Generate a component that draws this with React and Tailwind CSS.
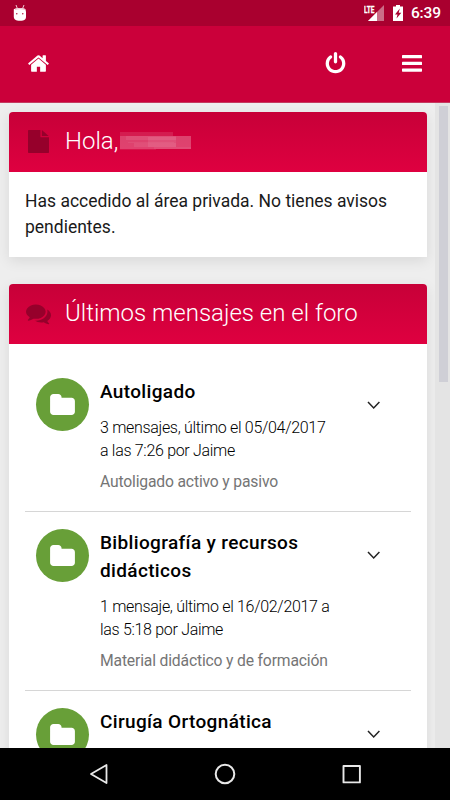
const threads = [
  {
    title: ["Autoligado"],
    info: ["3 mensajes, último el 05/04/2017", "a las 7:26 por Jaime"],
    description: "Autoligado activo y pasivo",
  },
  {
    title: ["Bibliografía y recursos", "didácticos"],
    info: ["1 mensaje, último el 16/02/2017 a", "las 5:18 por Jaime"],
    description: "Material didáctico y de formación",
  },
  {
    title: ["Cirugía Ortognática"],
  },
];

export default function App() {
  return (
    <div className="flex h-[800px] w-[450px] flex-col overflow-hidden bg-[#eeeeee] font-['Roboto',sans-serif]">
      <StatusBar />
      <Header />

      <div className="flex min-h-0 flex-1">
        <main className="flex w-[435px] shrink-0 flex-col gap-[26.5px] overflow-hidden pl-[9px] pt-[8.5px]">
          <Card title="Hola," icon={<FileIcon />} masked>
            <p className="h-[85.5px] whitespace-nowrap px-4 pt-4 text-[17.5px] leading-[26px] text-[#1a1a1a]">
              Has accedido al área privada. No tienes avisos
              <br />
              pendientes.
            </p>
          </Card>

          <Card title="Últimos mensajes en el foro" icon={<CommentsIcon />}>
            <div className="px-4 pt-[17.5px]">
              {threads.map((thread) => (
                <Thread key={thread.title[0]} thread={thread} />
              ))}
            </div>
          </Card>
        </main>

        {/* Scrollbar */}
        <div className="flex-1 bg-[#e4e4e4] pl-1 pt-[3px]">
          <div className="h-[276px] w-[9px] bg-[#cfcfd6]"></div>
        </div>
      </div>

      <NavigationBar />
    </div>
  );
}

function StatusBar() {
  return (
    <div className="flex h-[26px] shrink-0 items-center bg-[#a9002f] pl-[13px] pr-[9px] text-white">
      <DebugIcon />
      <div className="ml-auto flex items-center">
        <SignalIcon />
        <BatteryIcon />
        <span className="ml-2 pt-[2px] text-[15.5px] font-medium leading-none tracking-[-0.1px]">6:39</span>
      </div>
    </div>
  );
}

function Header() {
  return (
    <header className="flex h-[77px] shrink-0 items-center border-b border-[#c43a60] bg-[#cb003a] pb-[2px] pl-[27px] pr-[28px] text-white">
      <button>
        <HomeIcon />
      </button>
      <button className="ml-auto">
        <PowerIcon />
      </button>
      <button className="ml-[55.5px]">
        <MenuIcon />
      </button>
    </header>
  );
}

function Card({ title, icon, masked, children }) {
  return (
    <section className="w-[417.5px] shrink-0 rounded-t bg-white shadow-[0_4px_14px_rgba(0,0,0,0.09)]">
      <div className="flex h-[60px] items-center rounded-t bg-linear-to-b from-[#c70038] to-[#df0040] pb-px pl-[17px] text-white">
        <div className="flex w-[39px] shrink-0 text-[#96002b]">{icon}</div>
        <h2 className="whitespace-nowrap text-[24px] font-light leading-none">{title}</h2>
        {masked && <MaskedName />}
      </div>
      {children}
    </section>
  );
}

// Pixelated strip that hides the user's name
function MaskedName() {
  return (
    <svg className="ml-[2px] h-[19px] w-[71px]" viewBox="0 0 71 19" shapeRendering="crispEdges" fill="#fff">
      <path fillOpacity=".11" d="M0 0h53v4H0z" />
      <path fillOpacity=".26" d="M0 4h71v13H0z" />
      <path fillOpacity=".08" d="M0 17h36v1H0z" />
      <path fillOpacity=".07" d="M6 4h50v4H6zM14 11h42v4H14z" />
      <path fillOpacity=".08" d="M28 5h28v10H28z" />
      <path fillOpacity=".06" d="M8 10h46v1H8zM34 15h37v2H34z" />
    </svg>
  );
}

function Thread({ thread }) {
  return (
    <article className="flex border-b border-[#d6d6d6] pb-[17px] pl-[11px] pt-[17px]">
      <div className="flex h-[53px] w-[53px] shrink-0 items-center justify-center rounded-full bg-[#689f38] text-white">
        <FolderIcon />
      </div>
      <div className="ml-[11px] w-[266px] whitespace-nowrap">
        <h3 className="text-[19px] font-medium leading-[28.5px] tracking-[0.35px] text-black">
          {thread.title.map((line) => (
            <span key={line} className="block">{line}</span>
          ))}
        </h3>
        {thread.info && (
          <p className="mt-[9px] text-[16px] font-light leading-[23px] tracking-[-0.31px] text-black">
            {thread.info.map((line) => (
              <span key={line} className="block">{line}</span>
            ))}
          </p>
        )}
        {thread.description && (
          <p className="mt-2 text-[15.7px] leading-[24px] tracking-[-0.17px] text-[#757575]">{thread.description}</p>
        )}
      </div>
      <button className="mt-[18.5px] h-4 w-4 text-[#222]">
        <ChevronIcon />
      </button>
    </article>
  );
}

function NavigationBar() {
  return (
    <nav className="flex h-[52px] shrink-0 items-center justify-between bg-black px-[88px] text-[#e8e8e8]">
      <svg className="h-[22px] w-[22px]" viewBox="0 0 22 22" fill="none" stroke="currentColor" strokeWidth="1.8" strokeLinejoin="round">
        <path d="M3 11 18.500 2v18z" />
      </svg>
      <svg className="h-[22px] w-[22px]" viewBox="0 0 22 22" fill="none" stroke="currentColor" strokeWidth="2">
        <circle cx="11" cy="11" r="9.300" />
      </svg>
      <svg className="h-[22px] w-[22px]" viewBox="0 0 22 22" fill="none" stroke="currentColor" strokeWidth="1.9" strokeLinejoin="round">
        <path d="M3.500 3h16.400v16.400H3.500z" />
      </svg>
    </nav>
  );
}

function DebugIcon() {
  return (
    <svg className="h-4 w-[14px]" viewBox="0 0 14 16" fill="currentColor">
      <path d="M3 0l1.200 3M11 0 9.800 3" stroke="currentColor" strokeWidth=".8" />
      <path d="M.8 4.200C3 2.600 11 2.600 12.500 4.200L13 7v5q0 3-3 3.400-3 .5-6 0-3-.4-3.200-3.400V7z" />
      <path d="M2 4.300q5-1.300 10 0" stroke="#e3a5b6" strokeWidth=".8" fill="none" />
      <circle cx="3.800" cy="8.800" r=".7" fill="#a9002f" />
      <circle cx="9.800" cy="8.800" r=".7" fill="#a9002f" />
    </svg>
  );
}

function SignalIcon() {
  return (
    <svg className="h-[17px] w-5" viewBox="0 0 20 17">
      <path fill="#cb6d87" d="M20 0v16H4z" />
      <path fill="#a9002f" d="M0 0h11v9H0z" />
      <path fill="#fff" d="M13 7v9H4z" />
      <text x="0" y="7.500" fill="#fff" stroke="#fff" strokeWidth=".3" fontSize="9" fontWeight="700" textLength="10.500" lengthAdjust="spacingAndGlyphs">LTE</text>
    </svg>
  );
}

function BatteryIcon() {
  return (
    <svg className="ml-[9px] h-4 w-[10px]" viewBox="0 0 10 16">
      <path fill="#fff" d="M3 0h4v1.500h3V16H0V1.500h3z" />
      <path fill="#a9002f" d="M6.800 3.500 2 9.500h2.500L3.500 13.500 8.300 7.800H5.700z" />
    </svg>
  );
}

function HomeIcon() {
  return (
    <svg className="h-[23px] w-[23px]" fill="currentColor" viewBox="0 0 1792 1792">
      <path d="M1472 992v480q0 26-19 45t-45 19h-384v-384h-256v384h-384q-26 0-45-19t-19-45v-480q0-1 .5-3t.5-3l575-474 575 474q1 2 1 6zm223-69l-62 74q-8 9-21 11h-3q-13 0-21-7l-692-577-692 577q-12 8-24 7-13-2-21-11l-62-74q-8-10-7-23.500t11-21.500l719-599q32-26 76-26t76 26l244 204v-195q0-14 9-23t23-9h192q14 0 23 9t9 23v408l219 182q10 8 11 21.500t-7 23.500z" />
    </svg>
  );
}

function PowerIcon() {
  return (
    <svg className="h-[23px] w-[23px]" fill="currentColor" viewBox="0 0 1792 1792">
      <path d="M1664 896q0 156-61 298t-164 245-245 164-298 61-298-61-245-164-164-245-61-298q0-182 80.500-343t226.500-270q43-32 95.500-25t83.500 50q32 42 24.500 94.500t-49.500 84.500q-98 74-151.500 181t-53.500 228q0 104 40.500 198.500t109.500 163.500 163.500 109.500 198.500 40.500 198.500-40.500 163.500-109.500 109.500-163.500 40.500-198.500q0-121-53.500-228t-151.500-181q-42-32-49.500-84.500t24.500-94.500q31-43 84-50t95 25q146 109 226.500 270t80.500 343zm-640-768v640q0 52-38 90t-90 38-90-38-38-90v-640q0-52 38-90t90-38 90 38 38 90z" />
    </svg>
  );
}

function MenuIcon() {
  return (
    <svg className="h-[23px] w-5" fill="currentColor" viewBox="0 0 20 23">
      <rect y="3" width="20" height="3.300" rx=".6" />
      <rect y="9.700" width="20" height="3.300" rx=".6" />
      <rect y="16.400" width="20" height="3.300" rx=".6" />
    </svg>
  );
}

function FileIcon() {
  return (
    <svg className="ml-[2px] h-[23px] w-[21px]" fill="currentColor" viewBox="0 0 21 23">
      <path d="M.8 0h11.600v7.300H21v15q0 .7-.7.700H.8Q0 23 0 22.200V.8Q0 0 .8 0z" />
      <path d="M13.900 0 20.700 6.100h-6.800z" />
    </svg>
  );
}

function CommentsIcon() {
  return (
    <svg className="h-[25px] w-[25px]" fill="currentColor" viewBox="0 0 1792 1792">
      <path d="M1408 768q0 139-94 257t-256.500 186.500-353.500 68.500q-86 0-176-16-124 88-278 128-36 9-86 16h-3q-11 0-20.500-8t-11.500-21q-1-3-1-6.500t.5-6.500 2-6l2.500-5 3.500-5.500 4-5 4.500-5 4-4.500q5-6 23-25t26-29.500 22.500-29 25-38.500 20.500-44q-124-72-195-177t-71-224q0-139 94-257t256.500-186.500 353.500-68.500 353.500 68.500 256.500 186.500 94 257zm384 256q0 120-71 224.500t-195 176.500q10 24 20.500 44t25 38.500 22.500 29 26 29.500 23 25q1 1 4 4.500t4.500 5 4 5 3.500 5.500l2.500 5 2 6 .5 6.500-1 6.500q-3 14-13 22t-22 7q-50-7-86-16-154-40-278-128-90 16-176 16-271 0-472-132 58 4 88 4 161 0 309-45t264-129q125-92 192-212t67-254q0-77-23-152 129 71 204 178t75 230z" />
    </svg>
  );
}

function FolderIcon() {
  return (
    <svg className="h-[21px] w-[25px]" fill="currentColor" viewBox="64 128 1664 1408">
      <path d="M1728 608v704q0 92-66 158t-158 66h-1216q-92 0-158-66t-66-158v-960q0-92 66-158t158-66h320q92 0 158 66t66 158v32h672q92 0 158 66t66 158z" />
    </svg>
  );
}

function ChevronIcon() {
  return (
    <svg className="h-4 w-4" fill="none" viewBox="0 0 16 16" stroke="currentColor">
      <path strokeWidth={1.500} d="M2 5l5.700 6L13.400 5" />
    </svg>
  );
}
